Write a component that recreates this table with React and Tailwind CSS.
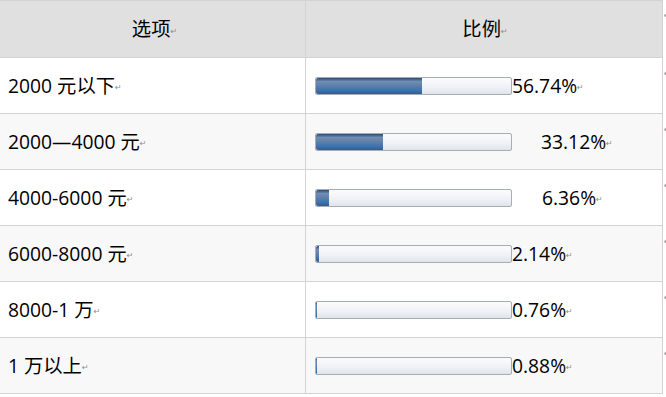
import React from 'react';

const rows = [
  { label: '2000 元以下', pct: '56.74%', fill: 106, gap: 'ml-0' },
  { label: '2000—4000 元', pct: '33.12%', fill: 67, gap: 'ml-[29px]' },
  { label: '4000-6000 元', pct: '6.36%', fill: 13, gap: 'ml-[30px]' },
  { label: '6000-8000 元', pct: '2.14%', fill: 3, gap: 'ml-0' },
  { label: '8000-1 万', pct: '0.76%', fill: 1, gap: 'ml-0' },
  { label: '1 万以上', pct: '0.88%', fill: 1, gap: 'ml-0' },
];

// little return mark that Word shows at the end of a paragraph
function Mark() {
  return <span className="text-[8px] leading-none text-[#8c8c8c] self-end mb-[3px] font-['DejaVu_Sans',sans-serif]">↵</span>;
}

function Bar({ fill }) {
  return (
    <div className="w-[197px] h-[18px] shrink-0 rounded-[2px] border border-[#a9adb3] bg-[linear-gradient(to_bottom,#fbfcfd,#eef1f5_60%,#dfe4ec)] overflow-hidden flex">
      <div
        className="h-full rounded-l-[2px] bg-[linear-gradient(to_bottom,#254d7b_0%,#6f8eb0_22%,#5c80a9_50%,#3d6fa8_80%,#2e5e98_100%)]"
        style={{ width: fill }}
      />
    </div>
  );
}

function RowEnd() {
  return (
    <div className="w-[3px] shrink-0 pt-[12px] pl-[1px] text-[8px] leading-none text-[#8c8c8c] font-['DejaVu_Sans',sans-serif] whitespace-nowrap">↵</div>
  );
}

export default function App() {
  return (
    <div className="w-[666px] h-[397px] bg-white overflow-hidden text-black font-['Open_Sans','Noto_Sans_CJK_SC',sans-serif] text-[19.3px]">
      {/* header */}
      <div className="flex h-[58px]">
        <div className="w-[306px] shrink-0 flex items-center justify-center bg-[#e0e0e0] border-t border-b border-r border-[#d3d3d3]">
          <span className="flex items-center leading-none pl-[4px]">选项<Mark /></span>
        </div>
        <div className="w-[357px] shrink-0 flex items-center justify-center bg-[#e0e0e0] border-t border-b border-r border-[#d3d3d3]">
          <span className="flex items-center leading-none pl-[2px]">比例<Mark /></span>
        </div>
        <RowEnd />
      </div>

      {rows.map((r, i) => (
        <div key={r.label} className="flex h-[56px]">
          <div className={`w-[306px] shrink-0 flex items-center pl-[8px] border-b border-r border-[#d3d3d3] ${i % 2 ? 'bg-[#f8f8f8]' : 'bg-white'}`}>
            <span className="flex items-center leading-none">{r.label}<Mark /></span>
          </div>
          <div className={`w-[357px] shrink-0 flex items-center pl-[9px] border-b border-r border-[#d3d3d3] ${i % 2 ? 'bg-[#f8f8f8]' : 'bg-white'}`}>
            <Bar fill={r.fill} />
            <span className={`flex items-center leading-none ${r.gap}`}>{r.pct}<Mark /></span>
          </div>
          <RowEnd />
        </div>
      ))}
    </div>
  );
}
